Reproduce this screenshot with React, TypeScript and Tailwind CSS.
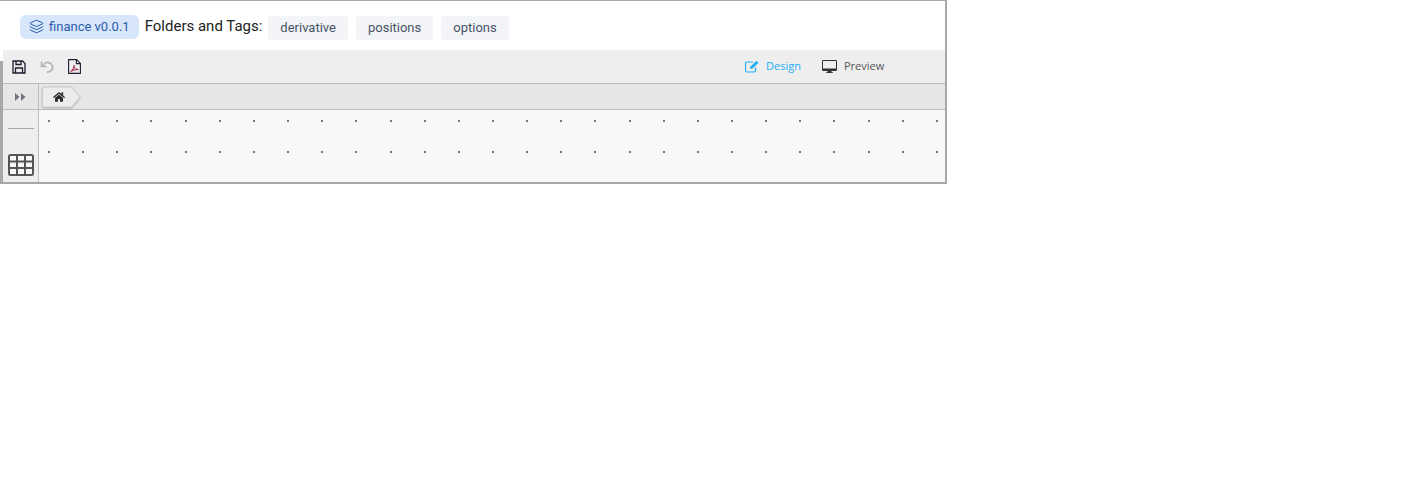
import { Home, Layers } from 'lucide-react';
import { FaHome, FaRegFilePdf } from 'react-icons/fa';

const tags = ['derivative', 'positions', 'options'];
const rows = [120, 151, 182];
const cols = Array.from({ length: 27 }, (_, i) => Math.round(48 + i * 34.15));

function SaveIcon() {
  return (
    <svg width="14" height="14" viewBox="0 0 14 14" fill="none" stroke="#1c1c2e" strokeWidth="1.3">
      <path d="M1 1h9.5L13 3.5V13H1z" />
      <path d="M4 1v3.5h5V1M3.5 13V8h7v5" />
    </svg>
  );
}

function UndoIcon() {
  return (
    <svg width="14" height="14" viewBox="0 0 14 14" fill="none" stroke="#b4b4b4" strokeWidth="1.8">
      <path d="M3 6.5A4.8 4.8 0 1 1 7 12" />
      <path d="M1.5 1.5v5h5" fill="none" strokeWidth="1.5" />
    </svg>
  );
}

function PdfIcon() {
  return (
    <svg width="13" height="15" viewBox="0 0 13 15" fill="none" strokeWidth="1.1">
      <path d="M.6.6h8l3.8 3.8v10H.6z" stroke="#1c1c2e" />
      <path d="M8.4.6v4h4" stroke="#1c1c2e" />
      <path d="M2.5 12.5c2-1 3.5-4 3.5-6.5 0 2.500 2 4.500 4.500 4.500-3 0-6 .5-8 2z" stroke="#b0305a" />
    </svg>
  );
}

function PencilBoxIcon() {
  return (
    <svg width="15" height="13" viewBox="0 0 15 13" fill="none" stroke="#21aef5" strokeWidth="1.2">
      <path d="M10.500 7.500v3a1.500 1.500 0 0 1-1.500 1.500H2a1.500 1.500 0 0 1-1.500-1.500V3.500A1.500 1.500 0 0 1 2 2h6" />
      <path d="M5 9l.5-2.500L11.500 .8l2 2L7.500 8.500z" fill="#21aef5" stroke="none" />
    </svg>
  );
}

function MonitorIcon() {
  return (
    <svg width="15" height="14" viewBox="0 0 15 14" fill="#333">
      <path d="M1.300 0h12.400A1.300 1.300 0 0 1 15 1.300V9.700A1.300 1.300 0 0 1 13.700 11H9.500v1.200H11V13H4v-.8h1.500V11H1.300A1.300 1.300 0 0 1 0 9.700V1.300A1.300 1.300 0 0 1 1.300 0zM1 1v7.500h13V1z" fillRule="evenodd" />
    </svg>
  );
}

function TableIcon() {
  return (
    <svg width="26" height="22" viewBox="0 0 26 22" fill="#f7f7f7" stroke="#555" strokeWidth="2">
      <rect x="1" y="1" width="24" height="20" rx="1.500" />
      <path d="M1 7.500h24M1 14h24M9 1v20M17 1v20" />
    </svg>
  );
}

export default function App() {
  return (
    <div className="w-[947px] h-[184px] flex flex-col bg-white border-t border-t-[#a8a8a8] border-r-2 border-r-[#a8a8a8] border-b-2 border-b-[#a8a8a8] pl-[3px] font-['Roboto',sans-serif] overflow-hidden relative">
      <div className="absolute left-0 top-[60px] bottom-0 w-[3px] bg-[#a8a8a8]" />

      {/* Title row */}
      <div className="h-[49px] flex items-center pl-[17px] pt-[5px] shrink-0">
        <span className="h-6 flex items-center gap-[5px] bg-[#d7e6fa] rounded-md px-[9px] text-[13px] text-[#2a5caa] -mt-[3px]">
          <Layers size={15} strokeWidth={1.6} />
          finance v0.0.1
        </span>
        <span className="ml-[6px] text-[15px] text-[#222] -mt-[3px]">Folders and Tags:</span>
        <div className="flex gap-2 ml-[6px]">
          {tags.map((t) => (
            <span key={t} className="h-6 flex items-center px-3 bg-[#f2f4f7] rounded text-[13px] text-[#475467]">
              {t}
            </span>
          ))}
        </div>
      </div>

      {/* Toolbar */}
      <div className="h-[34px] flex items-center bg-[#eeeeee] border-b border-b-[#bdbdbd] shrink-0 pl-[9px]">
        <div className="flex items-center gap-[14px]">
          <SaveIcon />
          <UndoIcon />
          <PdfIcon />
        </div>
        <div className="ml-[664px] flex items-center text-[11px] font-['Open_Sans',sans-serif]">
          <PencilBoxIcon />
          <span className="ml-[6px] text-[#21aef5]">Design</span>
          <span className="ml-[21px]"><MonitorIcon /></span>
          <span className="ml-[7px] text-[#555]">Preview</span>
        </div>
      </div>

      {/* Breadcrumb */}
      <div className="h-[26px] flex bg-[#e6e6e6] border-b border-b-[#bdbdbd] shrink-0">
        <div className="w-[36px] flex items-center justify-center border-r border-r-[#bdbdbd] text-[#6b7280]">
          <svg width="11" height="8" viewBox="0 0 11 8" fill="#6f7480">
            <path d="M0 0l4.500 4L0 8zM6 0l4.500 4L6 8z" />
          </svg>
        </div>
        <div className="ml-[3px] mt-[2px] relative">
          <svg width="40" height="22" viewBox="0 0 40 22" className="drop-shadow-[0_1px_1px_rgba(0,0,0,0.2)]">
            <path d="M.5 3a2 2 0 0 1 2-2H29.500L38 11l-8.500 10H2.500a2 2 0 0 1-2-2z" fill="#ececec" stroke="#c8c8c8" />
          </svg>
          <FaHome size={12} className="absolute left-[11px] top-[5px] text-[#2b2b2b]" />
        </div>
      </div>

      {/* Canvas */}
      <div className="flex-1 flex min-h-0">
        <div className="w-[36px] bg-[#eeeeee] border-r border-r-[#bdbdbd] flex flex-col items-center shrink-0">
          <div className="w-[26px] h-px bg-[#a8a8a8] mt-[18px]" />
          <div className="mt-[25px]"><TableIcon /></div>
        </div>
        <div className="flex-1 bg-[#f8f8f8] relative overflow-hidden">
          <svg className="absolute -left-[39px] -top-[110px]" width="946" height="184" fill="#777">
            {rows.map((y) =>
              cols.map((x) => <rect key={`${x}-${y}`} x={x} y={y} width="2" height="2" />)
            )}
          </svg>
        </div>
      </div>
    </div>
  );
}
